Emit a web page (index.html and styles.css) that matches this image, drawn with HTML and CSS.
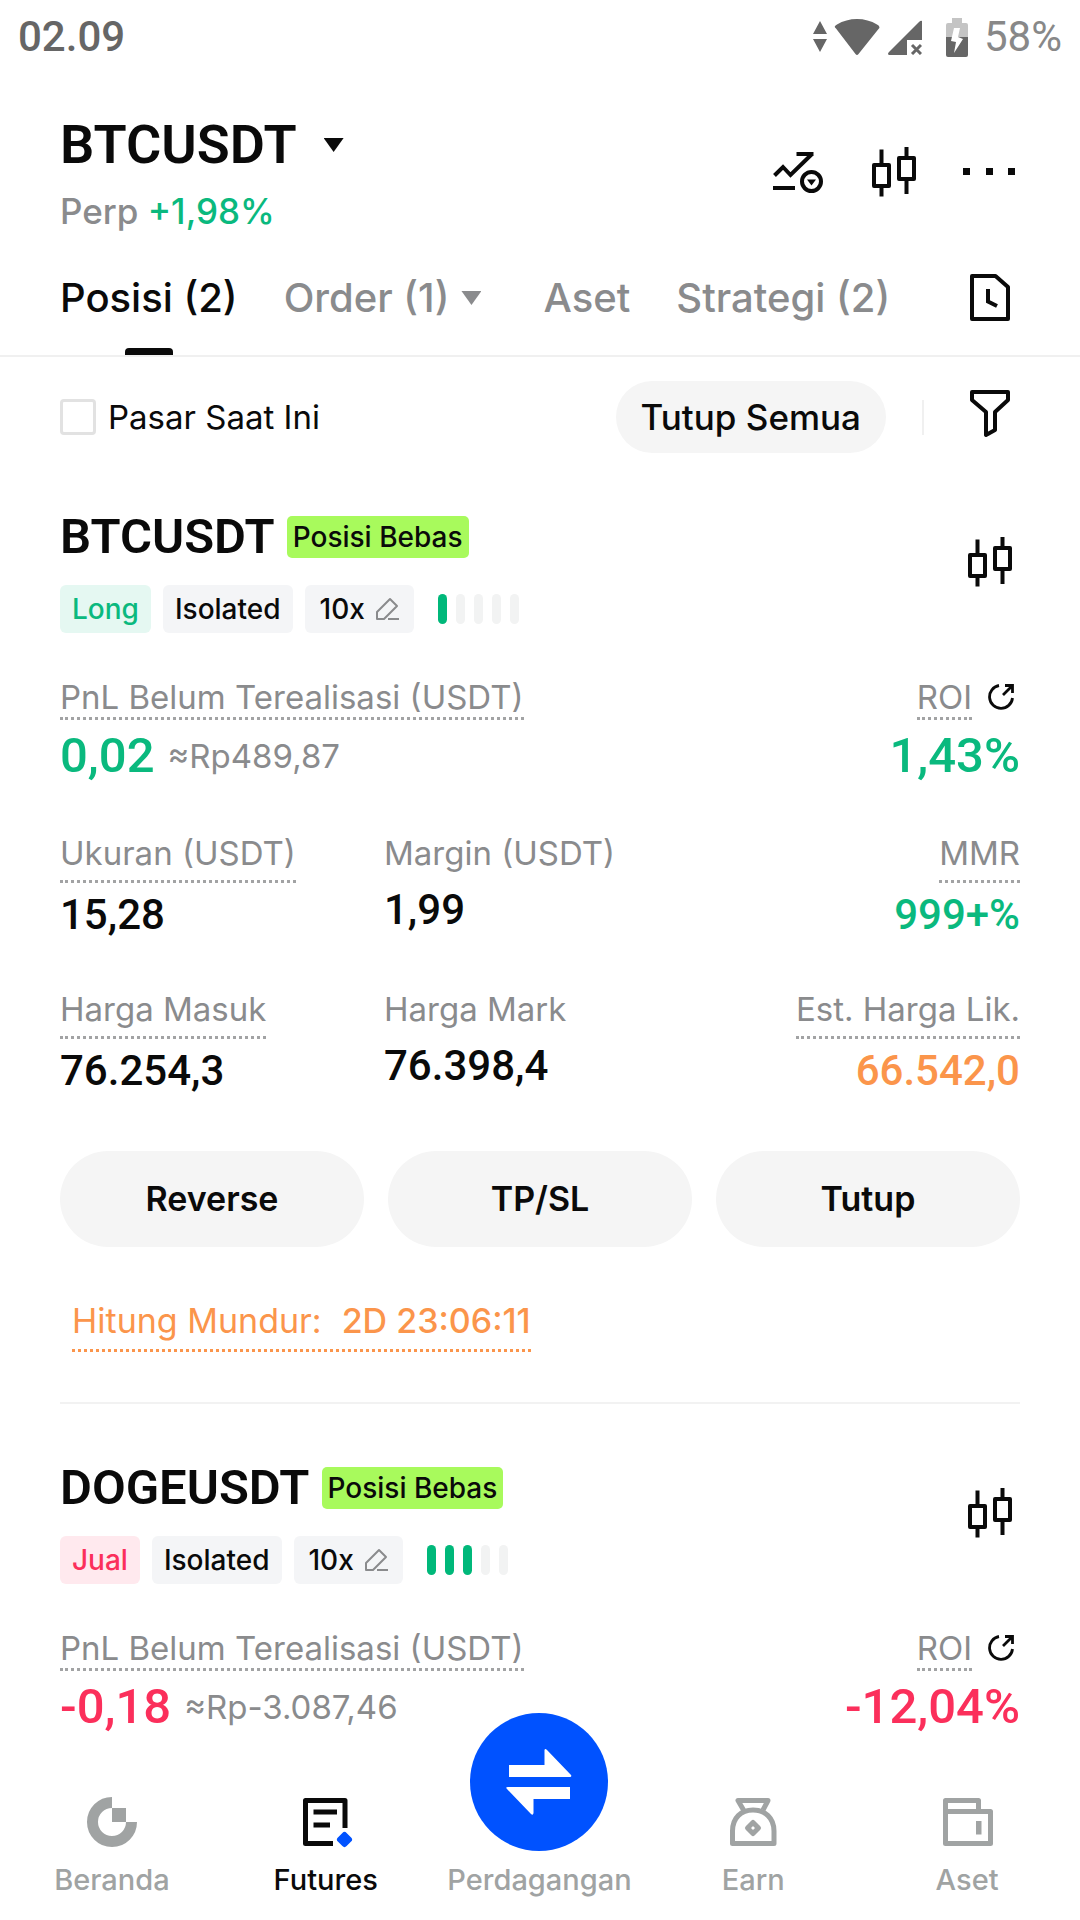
FILE: index.html
```html
<!DOCTYPE html>
<html lang="id">
<head>
    <meta charset="UTF-8">
    <meta name="viewport" content="width=device-width, initial-scale=1.0">
    <title>BTCUSDT Perp</title>
    <link rel="stylesheet" href="styles.css">
</head>
<body>
    <!-- Shared icons -->
    <svg class="sprite" aria-hidden="true">
        <symbol id="icon-candles" viewBox="0 0 60 60">
            <g fill="none" stroke="currentColor" stroke-width="4" stroke-linejoin="round">
                <rect x="10" y="23" width="15" height="21"/>
                <rect x="35" y="16" width="15" height="21"/>
                <path d="M17.500 7.500V23M17.500 44V54.500M42.500 5V16M42.500 37V52"/>
            </g>
        </symbol>
        <symbol id="icon-edit" viewBox="0 0 24 24">
            <path d="M2 22V15L15 2L22 9L9 22ZM13 22H24" fill="none" stroke="currentColor" stroke-width="2" stroke-linejoin="round"/>
        </symbol>
        <symbol id="icon-share" viewBox="0 0 28 28">
            <path d="M11 2.500A11.500 11.500 0 1 0 24.500 15M15 12L24 3M17 2.500H24.500V10" fill="none" stroke="currentColor" stroke-width="2.800"/>
        </symbol>
    </svg>

    <div class="status-bar">
        <span class="clock">02.09</span>
        <div class="status-icons">
            <svg class="updown" viewBox="0 0 14 32" aria-hidden="true">
                <path d="M7 0L14 13H0ZM0 18H14L7 31Z" fill="currentColor"/>
            </svg>
            <svg class="wifi" viewBox="0 0 46 36" aria-hidden="true">
                <path d="M2 9.500Q-1 7.500 3 5.500Q12 0 23 0Q34 0 43 5.500Q47 7.500 44.500 10L24.500 35Q23 37 21.500 35Z" fill="currentColor"/>
            </svg>
            <svg class="signal" viewBox="0 0 34 36" aria-hidden="true">
                <path d="M34 2V21H19V36H1Q-1 35 1 33L31 3Q33 1 34 2Z" fill="currentColor"/>
                <path d="M24 26L33 35M33 26L24 35" stroke="currentColor" stroke-width="3"/>
            </svg>
            <svg class="battery" viewBox="0 0 22 39" aria-hidden="true">
                <path d="M6 0H16V5H20Q22 5 22 7V19H0V7Q0 5 2 5H6Z" fill="#c4c4c4"/>
                <path d="M0 19H22V37Q22 39 20 39H2Q0 39 0 37Z" fill="currentColor"/>
                <path d="M8 10H14L12 19L17 21L8 35L10 24L5 23Z" fill="#fff"/>
            </svg>
            <span class="charge">58%</span>
        </div>
    </div>

    <header class="header">
        <div>
            <h1><button class="pair">BTCUSDT <span class="caret"></span></button></h1>
            <p class="pair-info">Perp <span class="up">+1,98%</span></p>
        </div>
        <div class="header-icons">
            <button class="icon-btn" aria-label="Analisis">
                <svg class="icon" viewBox="0 0 60 60">
                    <g fill="none" stroke="currentColor" stroke-width="4">
                        <path d="M6.500 33.500L15 25L22.500 33L43.500 12.500M28.500 12H45.500M5 46H27"/>
                        <circle cx="43.500" cy="39.500" r="9.500"/>
                    </g>
                    <path d="M39 37.500H48L43.500 43.500Z" fill="currentColor"/>
                </svg>
            </button>
            <button class="icon-btn" aria-label="Grafik">
                <svg class="icon"><use href="#icon-candles"/></svg>
            </button>
            <button class="icon-btn" aria-label="Lainnya">
                <svg class="icon" viewBox="0 0 60 60">
                    <path d="M3 26H10V33H3ZM26 26H33V33H26ZM48 26H55V33H48Z" fill="currentColor"/>
                </svg>
            </button>
        </div>
    </header>

    <nav class="tabs">
        <button class="tab active">Posisi (2)</button>
        <button class="tab tab-menu">Order (1) <span class="caret"></span></button>
        <button class="tab">Aset</button>
        <button class="tab">Strategi (2)</button>
        <button class="icon-btn tabs-end" aria-label="Riwayat">
            <svg class="icon" viewBox="0 0 60 60">
                <g fill="none" stroke="currentColor" stroke-width="4" stroke-linejoin="round">
                    <path d="M12 8H35.500L48 19V51H12Z"/>
                    <path d="M28 21V33.500L37 38" stroke-linejoin="miter"/>
                </g>
            </svg>
        </button>
    </nav>

    <main class="content">
        <div class="filters">
            <label class="check"><input type="checkbox"> Pasar Saat Ini</label>
            <button class="close-all">Tutup Semua</button>
            <span class="separator"></span>
            <button class="icon-btn" aria-label="Filter">
                <svg class="icon" viewBox="0 0 60 60">
                    <path d="M12 5H48V13L35 25V43L26 48V25L12 13Z" fill="none" stroke="currentColor" stroke-width="4" stroke-linejoin="round"/>
                </svg>
            </button>
        </div>

        <article class="position">
            <div class="position-head">
                <div>
                    <div class="position-title">
                        <h2>BTCUSDT</h2>
                        <span class="badge">Posisi Bebas</span>
                    </div>
                    <div class="tags">
                        <span class="tag long">Long</span>
                        <span class="tag">Isolated</span>
                        <button class="tag leverage">10x <svg class="icon-edit"><use href="#icon-edit"/></svg></button>
                        <span class="risk"><i class="on"></i><i></i><i></i><i></i><i></i></span>
                    </div>
                </div>
                <button class="icon-btn chart-btn" aria-label="Grafik BTCUSDT">
                    <svg class="icon"><use href="#icon-candles"/></svg>
                </button>
            </div>

            <div class="pnl">
                <div>
                    <span class="label dotted">PnL Belum Terealisasi (USDT)</span>
                    <p class="pnl-value"><span class="amount up">0,02</span> <span class="approx">≈Rp489,87</span></p>
                </div>
                <div class="right">
                    <div class="roi">
                        <span class="label dotted">ROI</span>
                        <button class="share-btn" aria-label="Bagikan"><svg class="icon-share"><use href="#icon-share"/></svg></button>
                    </div>
                    <p class="pnl-value"><span class="amount up">1,43%</span></p>
                </div>
            </div>

            <dl class="stats">
                <div><dt class="label dotted">Ukuran (USDT)</dt><dd>15,28</dd></div>
                <div><dt class="label">Margin (USDT)</dt><dd>1,99</dd></div>
                <div class="right"><dt class="label dotted">MMR</dt><dd class="up">999+%</dd></div>
                <div><dt class="label dotted">Harga Masuk</dt><dd>76.254,3</dd></div>
                <div><dt class="label">Harga Mark</dt><dd>76.398,4</dd></div>
                <div class="right"><dt class="label dotted">Est. Harga Lik.</dt><dd class="warn">66.542,0</dd></div>
            </dl>

            <div class="actions">
                <button>Reverse</button>
                <button>TP/SL</button>
                <button>Tutup</button>
            </div>

            <p class="countdown">Hitung Mundur: <strong>2D 23:06:11</strong></p>
        </article>

        <article class="position">
            <div class="position-head">
                <div>
                    <div class="position-title">
                        <h2>DOGEUSDT</h2>
                        <span class="badge">Posisi Bebas</span>
                    </div>
                    <div class="tags">
                        <span class="tag short">Jual</span>
                        <span class="tag">Isolated</span>
                        <button class="tag leverage">10x <svg class="icon-edit"><use href="#icon-edit"/></svg></button>
                        <span class="risk"><i class="on"></i><i class="on"></i><i class="on"></i><i></i><i></i></span>
                    </div>
                </div>
                <button class="icon-btn chart-btn" aria-label="Grafik DOGEUSDT">
                    <svg class="icon"><use href="#icon-candles"/></svg>
                </button>
            </div>

            <div class="pnl">
                <div>
                    <span class="label dotted">PnL Belum Terealisasi (USDT)</span>
                    <p class="pnl-value"><span class="amount down">-0,18</span> <span class="approx">≈Rp-3.087,46</span></p>
                </div>
                <div class="right">
                    <div class="roi">
                        <span class="label dotted">ROI</span>
                        <button class="share-btn" aria-label="Bagikan"><svg class="icon-share"><use href="#icon-share"/></svg></button>
                    </div>
                    <p class="pnl-value"><span class="amount down">-12,04%</span></p>
                </div>
            </div>
        </article>
    </main>

    <nav class="bottom-nav">
        <a href="#beranda">
            <svg class="icon" viewBox="0 0 60 60">
                <path d="M30 11.500A19.500 19.500 0 1 0 49.500 31" fill="none" stroke="currentColor" stroke-width="11"/>
                <path d="M30 17H44V31H30Z" fill="currentColor"/>
            </svg>
            Beranda
        </a>
        <a href="#futures" class="current">
            <svg class="icon" viewBox="0 0 60 60">
                <path d="M49 37V9.500H9.500V52.500H37M17.500 21H41M17.500 34H34" fill="none" stroke="currentColor" stroke-width="5" stroke-linejoin="round"/>
                <path d="M48.500 44L53 48.500L48.500 53L44 48.500Z" fill="#0052ff" stroke="#0052ff" stroke-width="6" stroke-linejoin="round"/>
            </svg>
            Futures
        </a>
        <a href="#perdagangan">
            <span class="trade">
                <svg class="icon-swap" viewBox="0 0 68 70">
                    <path d="M4 18H39.500V3Q40 1 42 3L66 28Q67 30 65 30H4ZM65 40H3Q0 40 2 42L26 67Q28 69 28.500 66V52H65Z" fill="#fff"/>
                </svg>
            </span>
            Perdagangan
        </a>
        <a href="#earn">
            <svg class="icon" viewBox="0 0 60 60">
                <g fill="none" stroke="currentColor" stroke-width="5" stroke-linejoin="round">
                    <path d="M20.500 19L15 9.500H45L40 19"/>
                    <path d="M9.500 52.500V40C9.500 27 18 19 30 19S51 27 51 40V52.500Z"/>
                    <path d="M30 31.500L35.500 37L30 42.500L24.500 37Z"/>
                </g>
            </svg>
            Earn
        </a>
        <a href="#aset">
            <svg class="icon" viewBox="0 0 60 60">
                <path d="M8.500 20.500H53.500V52.500H8.500V9.500H41.500V20.500" fill="none" stroke="currentColor" stroke-width="5" stroke-linejoin="round"/>
                <path d="M39 30H44.500V43.500H39Z" fill="currentColor"/>
            </svg>
            Aset
        </a>
    </nav>
</body>
</html>
```

FILE: styles.css
```css
* {
    box-sizing: border-box;
}
body {
    margin: 0;
    min-height: 100vh;
    display: flex;
    flex-direction: column;
    background-color: #fff;
    color: #0a0a0a;
    font-family: Inter, sans-serif;
    font-size: 33px;
    line-height: 40px;
}
h1, h2, p, dl, dd {
    margin: 0;
}
button {
    border: none;
    padding: 0;
    background: none;
    color: inherit;
    font: inherit;
    cursor: pointer;
}
svg {
    display: block;
    flex: none;
}
.sprite {
    position: absolute;
    width: 0;
    height: 0;
}
.icon {
    width: 60px;
    height: 60px;
}
.icon-btn {
    flex: none;
}
.up {
    color: #0ab97e;
}
.down {
    color: #fb2f5b;
}
.warn {
    color: #fb954b;
}

/* Status bar */
.status-bar {
    display: flex;
    justify-content: space-between;
    align-items: center;
    height: 74px;
    padding: 0 18px;
    color: #666;
    font-family: Roboto, sans-serif;
    font-size: 42px;
}
.clock {
    font-weight: 500;
}
.status-icons {
    display: flex;
    align-items: center;
}
.updown {
    width: 14px;
    height: 32px;
    margin-right: 7px;
}
.wifi {
    width: 46px;
    height: 36px;
    margin-right: 8px;
}
.signal {
    width: 34px;
    height: 36px;
    margin-right: 24px;
}
.battery {
    width: 22px;
    height: 39px;
    margin-right: 16px;
}
.charge {
    color: #888;
}

/* Header */
.header {
    display: flex;
    justify-content: space-between;
    align-items: center;
    padding: 37px 60px 0;
}
.pair {
    display: flex;
    align-items: center;
    gap: 27px;
    font-family: Roboto, sans-serif;
    font-size: 54px;
    font-weight: 600;
    line-height: 68px;
}
.caret {
    width: 20px;
    height: 14px;
    background-color: currentColor;
    clip-path: polygon(0 0, 100% 0, 50% 100%);
}
.pair-info {
    margin-top: 10px;
    color: #8a8b8d;
    font-size: 35px;
    font-weight: 500;
    line-height: 44px;
}
.header-icons {
    display: flex;
    gap: 36px;
}

/* Tabs */
.tabs {
    display: flex;
    align-items: center;
    gap: 46px;
    padding: 35px 60px 27px;
    border-bottom: 2px solid #f0f0f0;
    color: #8a8b8d;
    font-size: 40px;
    font-weight: 500;
    line-height: 60px;
}
.tab {
    position: relative;
    white-space: nowrap;
}
.tab-menu {
    display: flex;
    align-items: center;
    gap: 12px;
    padding-right: 16px;
}
.tab.active {
    color: #0a0a0a;
}
.tab.active::after {
    content: "";
    position: absolute;
    left: 50%;
    bottom: -27px;
    width: 48px;
    height: 7px;
    margin-left: -24px;
    border-radius: 4px 4px 0 0;
    background-color: #0a0a0a;
}
.tabs-end {
    margin-left: auto;
    color: #0a0a0a;
}

/* Filter row */
.content {
    flex: 1;
    padding: 24px 60px 0;
}
.filters {
    display: flex;
    align-items: center;
}
.check {
    display: flex;
    align-items: center;
    gap: 12px;
    margin-right: auto;
}
.check input {
    appearance: none;
    width: 36px;
    height: 36px;
    margin: 0;
    border: 3px solid #e2e2e2;
    border-radius: 4px;
    background-color: #fff;
}
.close-all {
    padding: 16px 25px;
    border-radius: 36px;
    background-color: #f5f5f5;
    font-size: 35px;
    font-weight: 500;
}
.separator {
    width: 2px;
    height: 35px;
    margin: 0 36px;
    background-color: #f0f0f0;
}

/* Positions */
.position {
    padding: 60px 0 50px;
    border-bottom: 2px solid #f2f2f2;
}
.position:last-child {
    padding-bottom: 0;
    border-bottom: none;
}
.position-head {
    display: flex;
    justify-content: space-between;
    align-items: flex-start;
}
.position-title {
    display: flex;
    align-items: center;
    gap: 12px;
}
.position-title h2 {
    font-family: Roboto, sans-serif;
    font-size: 49px;
    font-weight: 600;
    line-height: 48px;
}
.badge {
    padding: 0 6px;
    border-radius: 5px;
    background-color: #a8fa5c;
    font-size: 28px;
    font-weight: 500;
    line-height: 42px;
}
.tags {
    display: flex;
    align-items: center;
    gap: 12px;
    margin-top: 24px;
}
.tag {
    display: flex;
    align-items: center;
    padding: 0 12px;
    border-radius: 6px;
    background-color: #f4f5f7;
    font-size: 28px;
    font-weight: 500;
    line-height: 48px;
}
.leverage {
    gap: 10px;
    padding: 0 15px;
}
.long {
    background-color: #e5f8f2;
    color: #0ab97e;
}
.short {
    background-color: #ffe9ee;
    color: #fb2f5b;
}
.icon-edit {
    width: 24px;
    height: 24px;
    color: #8a8b8d;
}
.risk {
    display: flex;
    gap: 9px;
    margin-left: 12px;
}
.risk i {
    width: 9px;
    height: 30px;
    border-radius: 5px;
    background-color: #f2f3f3;
}
.risk .on {
    background-color: #00b87a;
}
.chart-btn {
    margin-top: 19px;
}
.pnl {
    display: flex;
    justify-content: space-between;
    margin-top: 44px;
}
.right {
    display: flex;
    flex-direction: column;
    align-items: flex-end;
}
.label {
    display: block;
    width: fit-content;
    color: #8a8b8d;
    white-space: nowrap;
}
.dotted {
    border-bottom: 3px dotted #a2a3a4;
}
.roi {
    display: flex;
    gap: 16px;
    padding-right: 4px;
}
.share-btn {
    display: flex;
    align-items: center;
    height: 40px;
}
.icon-share {
    width: 28px;
    height: 28px;
}
.pnl-value {
    display: flex;
    align-items: center;
    gap: 13px;
    margin-top: 8px;
    line-height: 56px;
}
.amount {
    font-family: Roboto, sans-serif;
    font-size: 49px;
    font-weight: 500;
}
.approx {
    color: #8a8b8d;
}
.stats {
    display: grid;
    grid-template-columns: 324fr 318fr 318fr;
    row-gap: 48px;
    margin-top: 49px;
}
.stats .dotted {
    padding-bottom: 7px;
}
.stats dd {
    margin-top: 11px;
    font-family: Roboto, sans-serif;
    font-size: 42px;
    font-weight: 500;
    line-height: 52px;
}
.stats .dotted + dd {
    margin-top: 6px;
}
.actions {
    display: grid;
    grid-template-columns: repeat(3, 1fr);
    gap: 24px;
    margin-top: 54px;
}
.actions button {
    border-radius: 48px;
    background-color: #f5f5f5;
    font-size: 34px;
    font-weight: 600;
    line-height: 96px;
}
.countdown {
    display: flex;
    gap: 20px;
    width: fit-content;
    margin: 54px 0 0 12px;
    padding-bottom: 8px;
    border-bottom: 3px dotted #fb954b;
    color: #fb954b;
    font-size: 34px;
}
.countdown strong {
    font-weight: 500;
}

/* Bottom navigation */
.bottom-nav {
    position: sticky;
    bottom: 0;
    display: grid;
    grid-template-columns: repeat(5, 1fr);
    padding: 31px 6px 22px 5px;
    background-color: #fff;
}
.bottom-nav a {
    display: flex;
    flex-direction: column;
    align-items: center;
    justify-content: flex-end;
    gap: 11px;
    color: #a0a3a3;
    font-size: 29px;
    font-weight: 500;
    line-height: 36px;
    text-decoration: none;
}
.bottom-nav .current {
    color: #0a0a0a;
}
/* The trade button rises above the bar */
.trade {
    display: flex;
    justify-content: center;
    align-items: center;
    width: 138px;
    height: 138px;
    margin-top: -80px;
    border-radius: 50%;
    background-color: #0052ff;
}
.icon-swap {
    width: 68px;
    height: 70px;
}
```
